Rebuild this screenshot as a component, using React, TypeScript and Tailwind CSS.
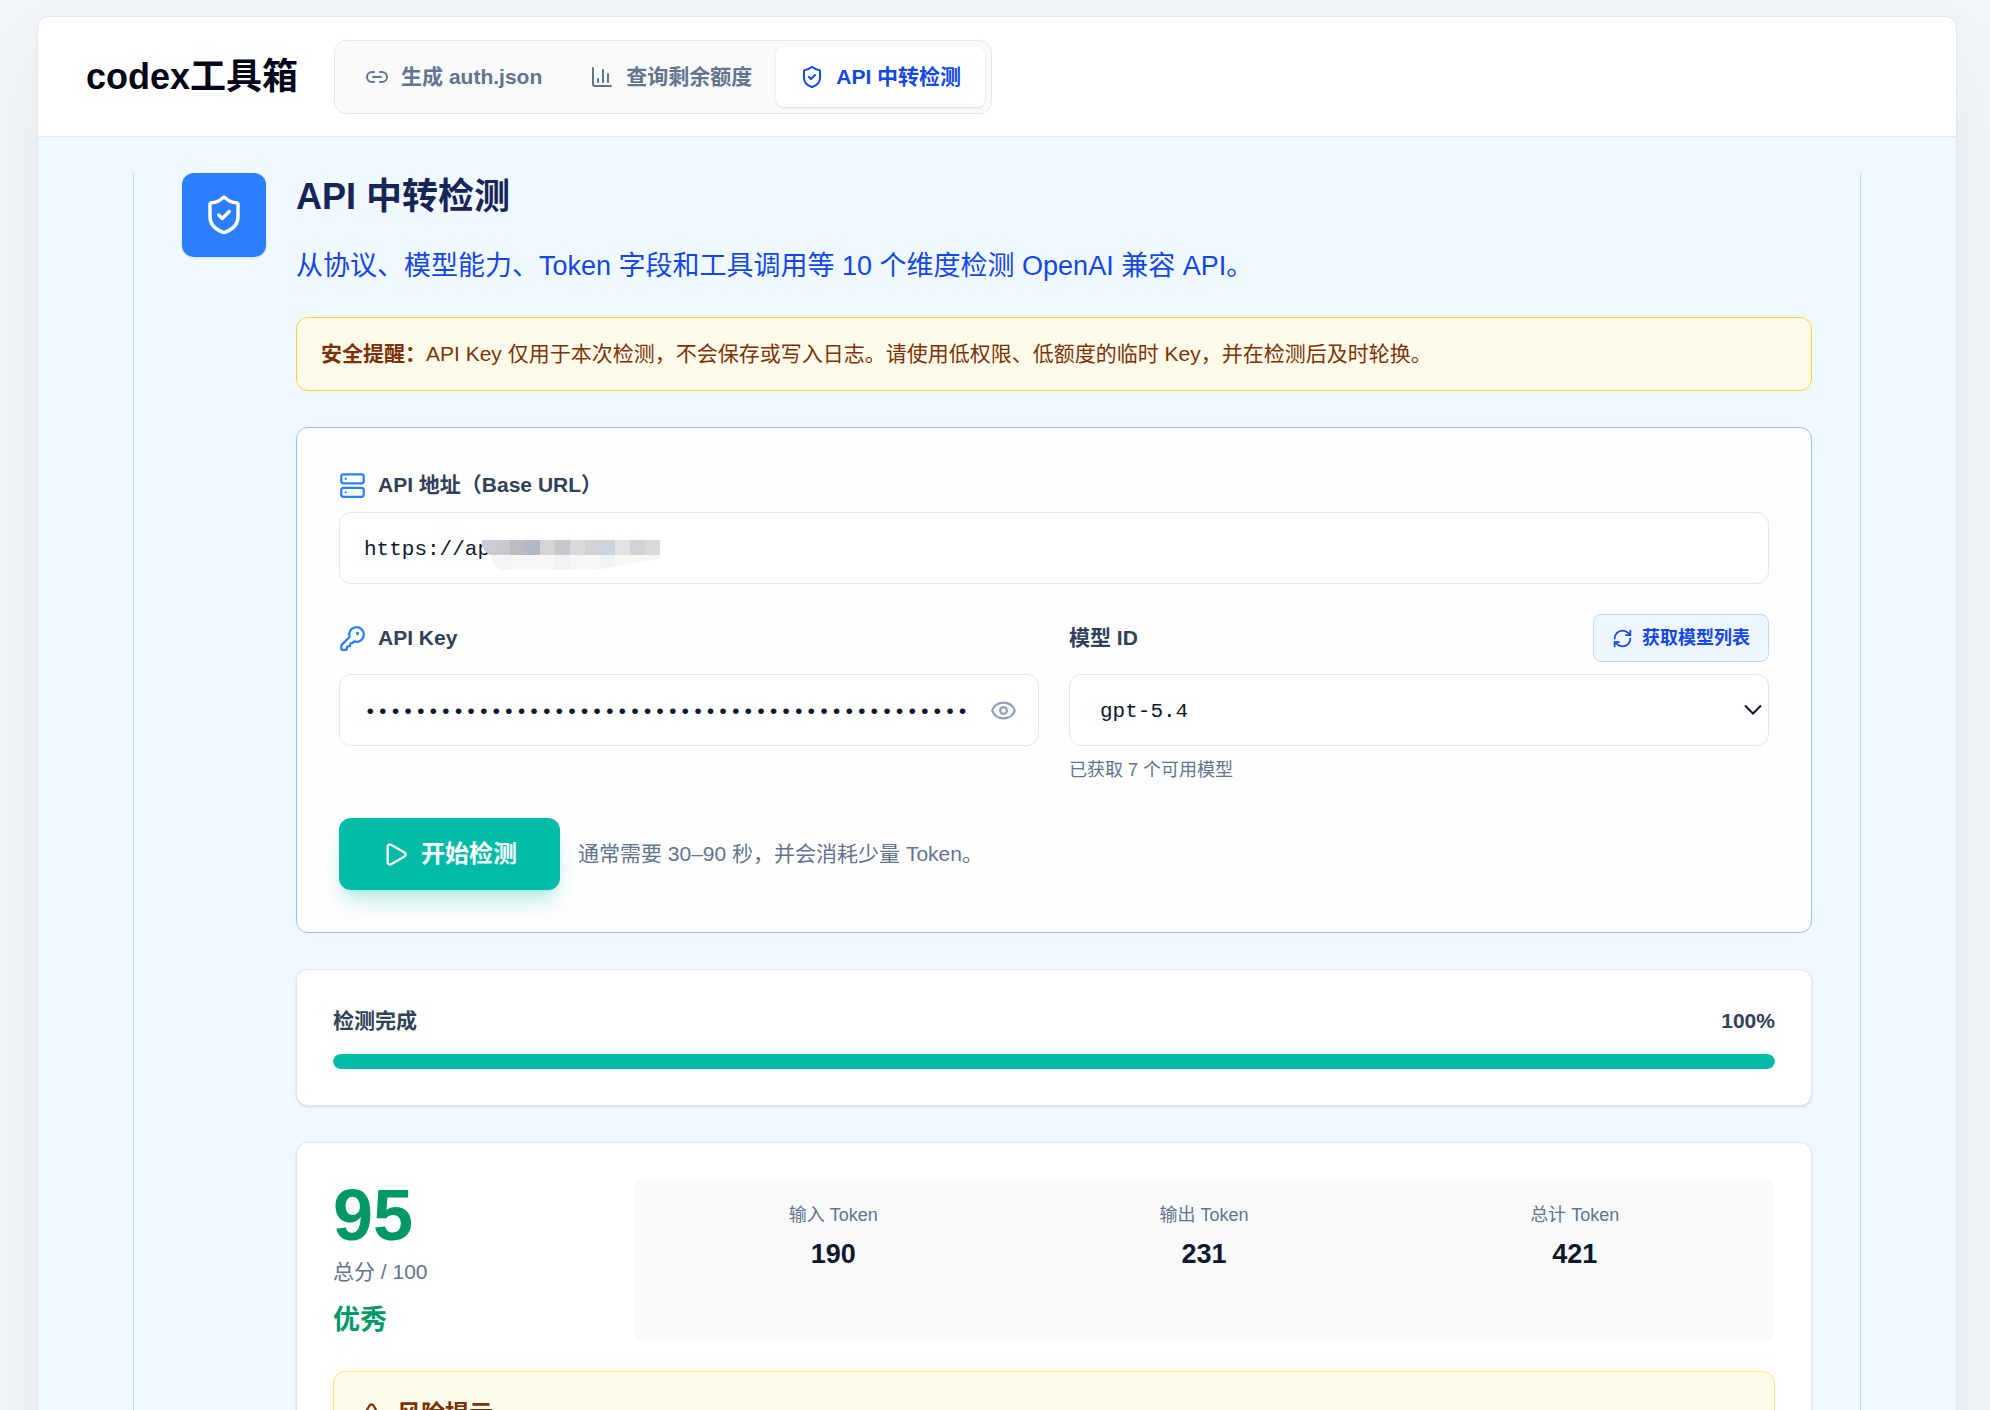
import React, { useState } from "react"
import {
  Eye,
  EyeOff,
  KeyRound,
  Link2,
  Play,
  RefreshCw,
  Server,
  ShieldCheck,
  TriangleAlert,
} from "lucide-react"

const models = ["gpt-5.4"]

const mosaicTop = [
  "#c7ccd7",
  "#c9c9cf",
  "#bdbbc2",
  "#b1b9c3",
  "#d5d5d8",
  "#c7c8cd",
  "#d9dade",
  "#d4d1d6",
  "#cdd3dd",
  "#e2e3e6",
  "#d2d1d7",
  "#dad9de",
]

const tokens = [
  { label: "输入 Token", value: 190 },
  { label: "输出 Token", value: 231 },
  { label: "总计 Token", value: 421 },
]

function BarsIcon() {
  return (
    <svg
      className="size-6"
      viewBox="0 0 24 24"
      fill="none"
      stroke="currentColor"
      strokeWidth="2"
      strokeLinecap="round"
      strokeLinejoin="round"
      aria-hidden="true"
    >
      <path d="M3 3v16a2 2 0 0 0 2 2h16" />
      <path d="M18 17V9" />
      <path d="M13 17V5" />
      <path d="M8 17v-3" />
    </svg>
  )
}

// hides the host part of the address
function Mosaic() {
  return (
    <svg
      className="pointer-events-none absolute left-[141px] top-6 h-9 w-[180px]"
      viewBox="0 0 180 36"
      aria-hidden="true"
    >
      <clipPath id="mosaicTop">
        <path d="M2 4h178v15H10Q1 14 2 4z" />
      </clipPath>
      <clipPath id="mosaicBottom">
        <path d="M12 19h168v4l-60 10q-9 1-18 1H27q-14 0-15-12z" />
      </clipPath>
      <g clipPath="url(#mosaicBottom)">
        <rect y="19" width="180" height="15" fill="#f7f7f8" />
        <rect x="12" y="19" width="18" height="15" fill="#f4f5f8" />
        <rect x="75" y="19" width="15" height="15" fill="#f1f2f5" />
        <rect x="120" y="19" width="15" height="15" fill="#f2f2f3" />
      </g>
      <g clipPath="url(#mosaicTop)">
        {mosaicTop.map((color, i) => (
          <rect key={i} x={i * 15} y="4" width="15" height="15" fill={color} />
        ))}
      </g>
    </svg>
  )
}

function App() {
  const [baseUrl, setBaseUrl] = useState("https://api.")
  const [apiKey, setApiKey] = useState("x".repeat(48))
  const [showKey, setShowKey] = useState(false)
  const [model, setModel] = useState(models[0])
  const progress = 100

  return (
    <div className="bg-slate-100 pb-9 pl-[37px] pr-[33px] pt-4 font-['Liberation_Sans','Noto_Sans_CJK_SC',sans-serif] text-slate-900">
      <div className="overflow-hidden rounded-xl border border-slate-200 bg-white shadow-[0_36px_90px_rgba(15,23,42,0.05)]">
        <header className="flex items-center gap-9 border-b border-slate-200 px-12 pb-[22px] pt-[23px]">
          <div className="text-4xl font-bold text-slate-950">codex工具箱</div>
          <nav className="flex rounded-xl border border-slate-200 bg-slate-50 p-1.5 text-[21px] font-bold leading-[30px] text-slate-500">
            <button className="flex items-center gap-3 rounded-lg px-6 py-[15px]">
              <Link2 className="size-6" />
              生成 auth.json
            </button>
            <button className="flex items-center gap-3 rounded-lg px-6 py-[15px]">
              <BarsIcon />
              查询剩余额度
            </button>
            <button className="flex items-center gap-3 rounded-lg bg-white px-6 py-[15px] text-blue-700 shadow">
              <ShieldCheck className="size-6" />
              API 中转检测
            </button>
          </nav>
        </header>

        <main className="bg-sky-50 pt-9">
          <section className="mx-auto flex max-w-[1728px] gap-[30px] border-x border-blue-200 px-12 pb-12">
            <div className="flex size-[84px] shrink-0 items-center justify-center rounded-xl bg-blue-500 text-white shadow">
              <ShieldCheck className="size-[42px]" />
            </div>

            <div className="min-w-0 flex-1">
              <h1 className="text-4xl font-bold leading-[48px] text-blue-950">
                API 中转检测
              </h1>
              <p className="mt-6 text-[27px] leading-[42px] text-blue-700">
                从协议、模型能力、Token 字段和工具调用等 10 个维度检测 OpenAI
                兼容 API。
              </p>

              <div className="mt-[30px] rounded-xl border border-amber-300 bg-amber-50 px-6 py-[18px] text-[21px] leading-9 text-amber-900">
                <strong>安全提醒：</strong>API Key
                仅用于本次检测，不会保存或写入日志。请使用低权限、低额度的临时
                Key，并在检测后及时轮换。
              </div>

              <form
                className="mt-9 rounded-xl border border-blue-300 bg-white/90 p-[42px]"
                onSubmit={(e) => e.preventDefault()}
              >
                <label
                  htmlFor="baseUrl"
                  className="flex items-center gap-3 text-[21px] font-bold leading-[30px] text-slate-700"
                >
                  <Server className="size-[27px] text-blue-500" />
                  API 地址（Base URL）
                </label>
                <div className="relative mt-3">
                  <input
                    id="baseUrl"
                    type="text"
                    className="h-[72px] w-full rounded-xl border border-slate-200 bg-white px-6 pt-0.5 font-['Liberation_Mono',monospace] text-[21px] outline-none focus:border-blue-500"
                    value={baseUrl}
                    onChange={(e) => setBaseUrl(e.target.value)}
                  />
                  <Mosaic />
                </div>

                <div className="mt-[30px] grid grid-cols-2 gap-[30px]">
                  <div>
                    <label
                      htmlFor="apiKey"
                      className="flex h-12 items-center gap-3 text-[21px] font-bold text-slate-700"
                    >
                      <KeyRound className="size-[27px] text-blue-500" />
                      API Key
                    </label>
                    <div className="relative mt-3">
                      <input
                        id="apiKey"
                        type={showKey ? "text" : "password"}
                        className="h-[72px] w-full rounded-xl border border-slate-200 bg-white pl-6 pr-[72px] pt-1 font-['Liberation_Mono',monospace] text-[21px] outline-none focus:border-blue-500"
                        value={apiKey}
                        onChange={(e) => setApiKey(e.target.value)}
                      />
                      <button
                        type="button"
                        aria-label="显示或隐藏 API Key"
                        className="absolute inset-y-0 right-[22px] text-slate-400"
                        onClick={() => setShowKey(!showKey)}
                      >
                        {showKey ? (
                          <EyeOff className="size-[27px]" />
                        ) : (
                          <Eye className="size-[27px]" />
                        )}
                      </button>
                    </div>
                  </div>

                  <div>
                    <div className="flex h-12 items-center justify-between">
                      <label
                        htmlFor="model"
                        className="text-[21px] font-bold text-slate-700"
                      >
                        模型 ID
                      </label>
                      <button
                        type="button"
                        className="flex h-12 items-center gap-[9px] rounded-lg border border-blue-200 bg-blue-50 px-[18px] text-lg font-bold text-blue-700"
                      >
                        <RefreshCw className="size-[21px]" />
                        获取模型列表
                      </button>
                    </div>
                    <div className="relative mt-3">
                      <select
                        id="model"
                        className="h-[72px] w-full appearance-none rounded-xl border border-slate-200 bg-white px-[30px] pt-1 font-['Liberation_Mono',monospace] text-[21px] outline-none focus:border-blue-500"
                        value={model}
                        onChange={(e) => setModel(e.target.value)}
                      >
                        {models.map((it) => (
                          <option key={it}>{it}</option>
                        ))}
                      </select>
                      <svg
                        className="pointer-events-none absolute right-1.5 top-[30px] h-3 w-5"
                        viewBox="0 0 20 12"
                        fill="none"
                        stroke="currentColor"
                        strokeWidth="2"
                        aria-hidden="true"
                      >
                        <path d="M2 1.5l8 8 8-8" />
                      </svg>
                    </div>
                    <p className="mt-3 text-lg leading-6 text-slate-500">
                      已获取 7 个可用模型
                    </p>
                  </div>
                </div>

                <div className="mt-9 flex items-center gap-[18px]">
                  <button
                    type="submit"
                    className="flex h-[72px] items-center gap-3 rounded-xl bg-teal-500 px-[43px] text-2xl font-bold text-white shadow-[0_15px_22px_-4px_rgba(0,187,167,0.25),0_6px_9px_-6px_rgba(0,187,167,0.25)]"
                  >
                    <Play className="size-[27px]" />
                    开始检测
                  </button>
                  <span className="text-[21px] text-slate-500">
                    通常需要 30–90 秒，并会消耗少量 Token。
                  </span>
                </div>
              </form>

              <div className="mt-9 rounded-xl border border-slate-200 bg-white p-9 shadow">
                <div className="flex justify-between text-[21px] font-bold leading-[30px] text-slate-700">
                  <span>检测完成</span>
                  <span>{progress}%</span>
                </div>
                <div className="mt-[18px] h-[15px] overflow-hidden rounded-full bg-slate-100">
                  <div
                    className="h-full rounded-full bg-teal-500"
                    style={{ width: `${progress}%` }}
                  />
                </div>
              </div>

              <div className="mt-9 rounded-xl border border-slate-200 bg-white p-9 shadow">
                <div className="grid grid-cols-[270px_1fr] gap-[30px]">
                  <div>
                    <div className="text-7xl font-bold leading-none text-emerald-600">
                      95
                    </div>
                    <div className="mt-1.5 text-[21px] leading-[30px] text-slate-500">
                      总分 / 100
                    </div>
                    <div className="mt-3 text-[27px] font-bold leading-[42px] text-emerald-600">
                      优秀
                    </div>
                  </div>
                  <div className="grid grid-cols-3 gap-[18px] rounded-xl bg-slate-50 p-6 text-center">
                    {tokens.map((it) => (
                      <div key={it.label}>
                        <div className="text-lg leading-6 text-slate-500">
                          {it.label}
                        </div>
                        <div className="mt-1.5 text-[27px] font-bold leading-[42px]">
                          {it.value}
                        </div>
                      </div>
                    ))}
                  </div>
                </div>

                <div className="mt-[30px] rounded-xl border border-amber-200 bg-amber-50 p-6 text-amber-900">
                  <h2 className="flex items-center gap-3 text-2xl font-bold leading-9">
                    <TriangleAlert className="size-[27px]" />
                    风险提示
                  </h2>
                </div>
              </div>
            </div>
          </section>
        </main>
      </div>
    </div>
  )
}

export default App
